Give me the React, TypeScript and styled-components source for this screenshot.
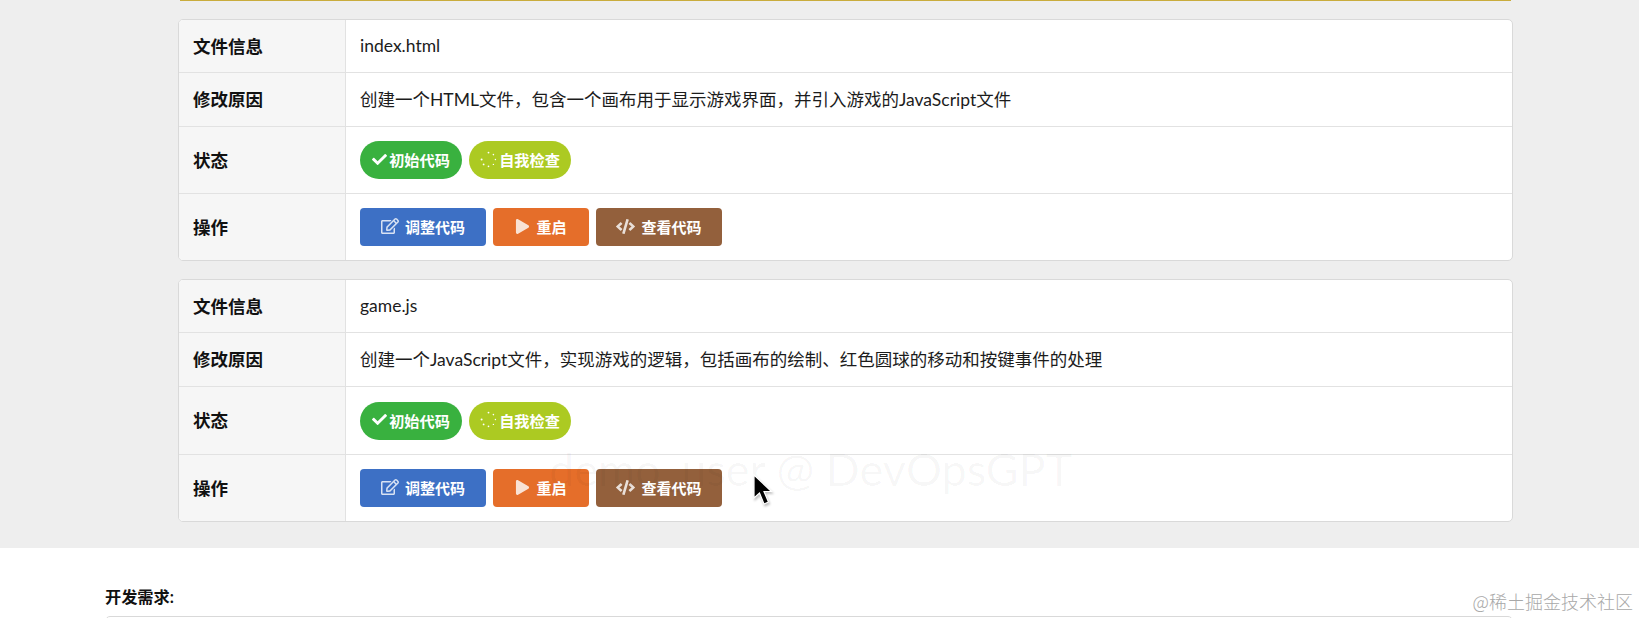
import styled, { createGlobalStyle } from 'styled-components';
import { FaCheck, FaCode, FaPlay, FaRegEdit } from 'react-icons/fa';

const GlobalStyle = createGlobalStyle`
  html, body {
    margin: 0;
    padding: 0;
    background: #ffffff;
    overflow: hidden;
  }
  body {
    width: 1639px;
    height: 618px;
    position: relative;
    font-family: Lato, "Noto Sans CJK SC", sans-serif;
    color: #1c1c1c;
  }
`;

type FileRow = {
  name: string;
  reason: string;
  statusHeight: number;
};

const files: FileRow[] = [
  {
    name: 'index.html',
    reason: '创建一个HTML文件，包含一个画布用于显示游戏界面，并引入游戏的JavaScript文件',
    statusHeight: 67,
  },
  {
    name: 'game.js',
    reason: '创建一个JavaScript文件，实现游戏的逻辑，包括画布的绘制、红色圆球的移动和按键事件的处理',
    statusHeight: 68,
  },
];

const SpinnerDots = () => (
  <svg width="17" height="17" viewBox="0 0 17 17" fill="#ffffff">
    <circle cx="8.5" cy="1.6" r="0.9" />
    <circle cx="13.4" cy="3.6" r="0.8" />
    <circle cx="15.4" cy="8.5" r="0.7" />
    <circle cx="13.4" cy="13.4" r="0.7" />
    <circle cx="8.5" cy="15.4" r="0.8" />
    <circle cx="3.6" cy="13.4" r="0.9" />
    <circle cx="1.6" cy="8.5" r="1" />
  </svg>
);

const Cursor = () => (
  <svg width="22" height="36" viewBox="0 0 22 36">
    <path
      d="M2 2 L2 25 L7.5 20 L12 31 L16.5 29 L12 18.5 L19.5 18.5 Z"
      fill="#000000"
      stroke="#ffffff"
      strokeWidth="1.2"
    />
  </svg>
);

const App = () => {
  return (
    <>
      <GlobalStyle />
      <GraySection>
        <Tables>
          {files.map((file) => (
            <InfoTable key={file.name}>
              <Row $height={53}>
                <LabelCell>文件信息</LabelCell>
                <TextCell>{file.name}</TextCell>
              </Row>
              <Row $height={54}>
                <LabelCell>修改原因</LabelCell>
                <TextCell>{file.reason}</TextCell>
              </Row>
              <Row $height={file.statusHeight}>
                <LabelCell>状态</LabelCell>
                <ValueCell>
                  <Pill $color="#39b13f">
                    <FaCheck size={15} />
                    初始代码
                  </Pill>
                  <Pill $color="#acca22">
                    <SpinnerDots />
                    自我检查
                  </Pill>
                </ValueCell>
              </Row>
              <Row $height={66} $last>
                <LabelCell>操作</LabelCell>
                <ValueCell>
                  <ActionButton $color="#3d70c5" $width={126}>
                    <FaRegEdit size={18} />
                    调整代码
                  </ActionButton>
                  <ActionButton $color="#e56e2a" $width={96}>
                    <FaPlay size={15} />
                    重启
                  </ActionButton>
                  <ActionButton $color="#93603c" $width={126}>
                    <FaCode size={19} />
                    查看代码
                  </ActionButton>
                </ValueCell>
              </Row>
            </InfoTable>
          ))}
        </Tables>
      </GraySection>
      <FormSection>
        <FieldLabel>开发需求:</FieldLabel>
        <FieldBox />
      </FormSection>
      <UserMark>demo_user @ DevOpsGPT</UserMark>
      <CursorSpot>
        <Cursor />
      </CursorSpot>
      <SiteMark>@稀土掘金技术社区</SiteMark>
    </>
  );
};

const GraySection = styled.div`
  height: 548px;
  box-sizing: border-box;
  background-color: #eeeeee;
  padding: 0 126px 0 178px;
`;

const Tables = styled.div`
  display: flex;
  flex-direction: column;
  gap: 18px;
  padding-top: 19px;
  position: relative;

  &::before {
    content: '';
    position: absolute;
    top: 0;
    left: 2px;
    right: 2px;
    height: 1px;
    background-color: #c9ac3c;
  }
`;

const InfoTable = styled.div`
  display: flex;
  flex-direction: column;
  background-color: #ffffff;
  border: 1px solid #d9d9d9;
  border-radius: 5px;
  overflow: hidden;
`;

const Row = styled.div<{ $height: number; $last?: boolean }>`
  display: grid;
  grid-template-columns: 167px 1fr;
  height: ${(props) => props.$height}px;
  box-sizing: border-box;
  border-bottom: ${(props) => (props.$last ? 'none' : '1px solid #e2e2e2')};
`;

const LabelCell = styled.div`
  display: flex;
  align-items: center;
  padding: 0 0 2px 14px;
  background-color: #f6f6f6;
  border-right: 1px solid #e2e2e2;
  font-size: 17.5px;
  font-weight: 700;
  color: #111111;
`;

const ValueCell = styled.div`
  display: flex;
  align-items: center;
  gap: 7px;
  padding-left: 14px;
  font-size: 17.5px;
  color: #1c1c1c;
`;

const TextCell = styled(ValueCell)`
  padding-bottom: 2px;
`;

const Pill = styled.div<{ $color: string }>`
  display: flex;
  align-items: center;
  justify-content: center;
  gap: 2px;
  width: 102px;
  height: 38px;
  box-sizing: border-box;
  padding-bottom: 2px;
  border-radius: 19px;
  background-color: ${(props) => props.$color};
  color: #ffffff;
  font-size: 15.2px;
  font-weight: 700;
`;

const ActionButton = styled.div<{ $color: string; $width: number }>`
  display: flex;
  align-items: center;
  justify-content: center;
  gap: 6px;
  width: ${(props) => props.$width}px;
  height: 38px;
  box-sizing: border-box;
  padding-bottom: 2px;
  border-radius: 4px;
  background-color: ${(props) => props.$color};
  color: #ffffff;
  font-size: 15px;
  font-weight: 700;

  svg {
    opacity: 0.8;
  }
`;

const FormSection = styled.div`
  padding: 40px 126px 0 105px;
`;

const FieldLabel = styled.div`
  font-size: 16.2px;
  font-weight: 700;
  line-height: 18px;
  color: #111111;
`;

const FieldBox = styled.div`
  height: 40px;
  margin-top: 10px;
  border: 1px solid #d9d9d9;
  border-radius: 5px;
`;

const UserMark = styled.div`
  position: absolute;
  top: 442px;
  left: 549px;
  font-family: Lato, sans-serif;
  font-size: 45px;
  line-height: 54px;
  white-space: nowrap;
  color: rgba(0, 0, 0, 0.035);
  pointer-events: none;
`;

const CursorSpot = styled.div`
  position: absolute;
  top: 473px;
  left: 752px;
  line-height: 0;
  filter: drop-shadow(1px 2px 1px rgba(0, 0, 0, 0.25));
`;

const SiteMark = styled.div`
  position: absolute;
  top: 588px;
  right: 6px;
  font-family: "Noto Sans CJK SC", sans-serif;
  font-size: 18px;
  font-weight: 300;
  line-height: 26px;
  white-space: nowrap;
  color: #a8a8a8;
`;

export default App;
